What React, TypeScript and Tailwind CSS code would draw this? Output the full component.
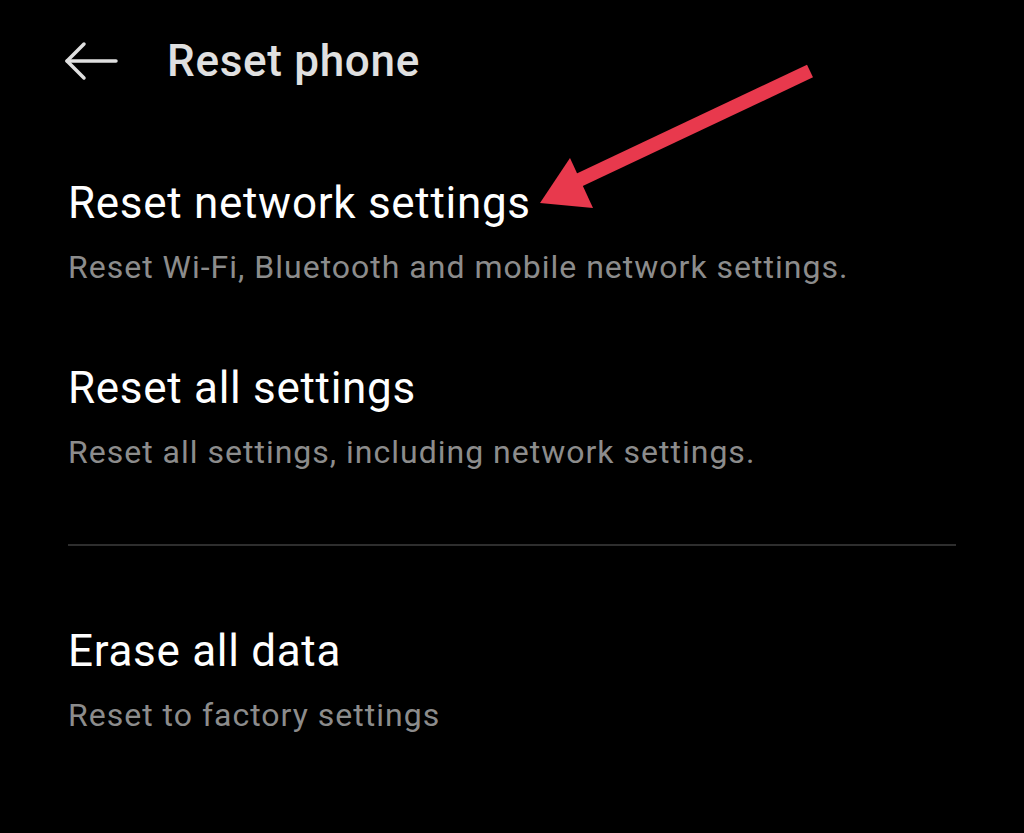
export default function App() {
  const items = [
    { title: 'Reset network settings', sub: 'Reset Wi-Fi, Bluetooth and mobile network settings.' },
    { title: 'Reset all settings', sub: 'Reset all settings, including network settings.' },
  ];

  return (
    <div className="relative w-[1024px] h-[833px] bg-black overflow-hidden font-['Roboto',sans-serif]">
      {/* Kopfzeile */}
      <div className="flex items-center h-[52px] mt-[35px] pl-[63px]">
        <svg width="56" height="40" viewBox="0 0 56 40" fill="none" stroke="#e0e0e0" strokeWidth="3.5" strokeLinecap="round" strokeLinejoin="round">
          <path d="M53 20H4" />
          <path d="M21 3 4 20l17 17" />
        </svg>
        <h1 className="ml-[48px] text-[44px] font-medium tracking-[0.7px] text-[#e0e0e0] leading-[52px]">Reset phone</h1>
      </div>

      <div className="px-[68px] pt-[15px]">
        {items.map((it) => (
          <div key={it.title} className="pt-[75px]">
            <div className="text-[44px] tracking-[0.7px] text-white leading-[52px]">{it.title}</div>
            <div className="mt-[18px] text-[32px] tracking-[1px] text-[#8c8c8c] leading-[40px]">{it.sub}</div>
          </div>
        ))}
        <div className="mt-[72px] h-[2px] w-[888px] bg-[#2e2e2e]" />
        <div className="pt-[79px]">
          <div className="text-[44px] tracking-[0.7px] text-white leading-[52px]">Erase all data</div>
          <div className="mt-[18px] text-[32px] tracking-[1px] text-[#8c8c8c] leading-[40px]">Reset to factory settings</div>
        </div>
      </div>

      {/* roter Hinweispfeil */}
      <svg className="absolute left-0 top-0 pointer-events-none" width="1024" height="833" viewBox="0 0 1024 833">
        <path d="M810 71 575 182" stroke="#e8394d" strokeWidth="14" strokeLinecap="butt" />
        <path d="M540 203 570 158 593 208Z" fill="#e8394d" />
      </svg>
    </div>
  );
}
